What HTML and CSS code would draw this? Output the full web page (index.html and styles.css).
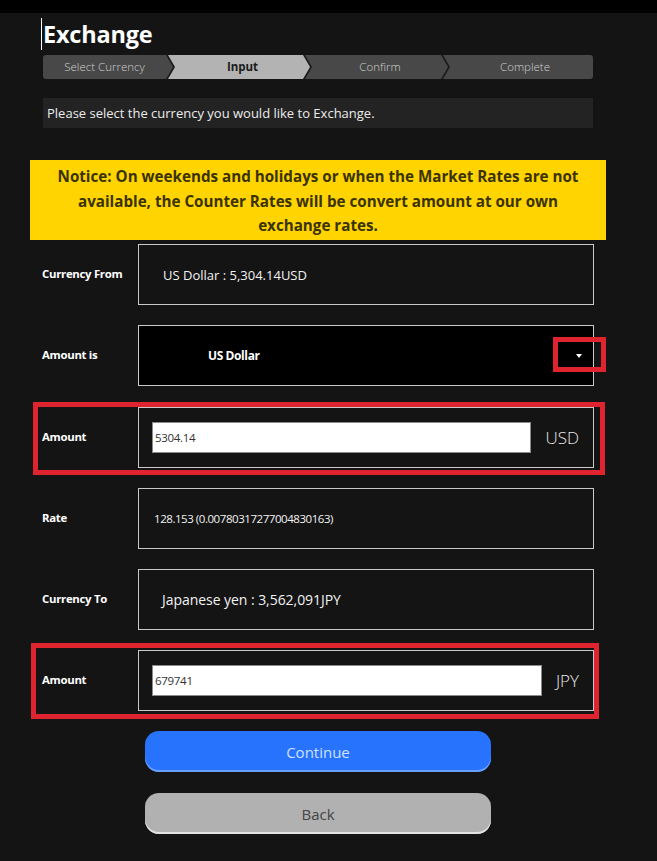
FILE: index.html
```html
<!DOCTYPE html>
<html lang="en">
<head>
<meta charset="utf-8">
<title>Exchange</title>
<link rel="stylesheet" href="styles.css">
</head>
<body>
<div class="topbar"></div>
<main class="page">
  <h1 class="title"><span class="caret"></span>Exchange</h1>
  <ol class="steps">
    <li class="step first">Select Currency</li>
    <li class="step active">Input</li>
    <li class="step">Confirm</li>
    <li class="step last">Complete</li>
  </ol>
  <div class="info">Please select the currency you would like to Exchange.</div>
  <div class="notice">Notice: On weekends and holidays or when the Market Rates are not available, the Counter Rates will be convert amount at our own exchange rates.</div>
  <div class="form">
    <div class="row">
      <div class="label">Currency From</div>
      <div class="field"><span class="text from">US Dollar : 5,304.14USD</span></div>
    </div>
    <div class="row">
      <div class="label">Amount is</div>
      <div class="field select">
        <span class="select-value">US Dollar</span>
        <span class="arrow"></span>
        <span class="mark mark-arrow"></span>
      </div>
    </div>
    <div class="row gap-plus">
      <div class="label">Amount</div>
      <div class="field inputs">
        <input class="amount" type="text" value="5304.14">
        <span class="unit">USD</span>
      </div>
      <span class="mark mark-a"></span>
    </div>
    <div class="row">
      <div class="label">Rate</div>
      <div class="field"><span class="text rate">128.153 (0.00780317277004830163)</span></div>
    </div>
    <div class="row">
      <div class="label">Currency To</div>
      <div class="field"><span class="text to">Japanese yen : 3,562,091JPY</span></div>
    </div>
    <div class="row">
      <div class="label">Amount</div>
      <div class="field inputs">
        <input class="amount" type="text" value="679741">
        <span class="unit">JPY</span>
      </div>
      <span class="mark mark-b"></span>
    </div>
  </div>
  <div class="actions">
    <button class="btn primary" type="button">Continue</button>
    <button class="btn secondary" type="button">Back</button>
  </div>
</main>
</body>
</html>
```

FILE: styles.css
```css
html, body {
  margin: 0;
  padding: 0;
}
body {
  background: #141414;
  font-family: "Open Sans", "Noto Sans", sans-serif;
  color: #fff;
  width: 657px;
  height: 861px;
  overflow: hidden;
}
.topbar {
  height: 13px;
  background: #000;
}
.page {
  padding-left: 43px;
  width: 550px;
}
.title {
  margin: 5px 0 0 -2px;
  font-size: 23.5px;
  line-height: 32px;
  font-weight: 700;
  color: #fff;
  display: flex;
  align-items: center;
  letter-spacing: -0.2px;
}
.caret {
  display: inline-block;
  width: 1px;
  height: 32px;
  background: #fff;
  margin-right: 1px;
}
.steps {
  list-style: none;
  margin: 5px 0 0;
  padding: 0;
  display: flex;
  height: 24px;
  background: #1c1c1c;
  border-radius: 3px;
  overflow: hidden;
}
.step {
  height: 24px;
  line-height: 24px;
  font-size: 11.5px;
  font-weight: 300;
  color: #cfcfcf;
  background: #484848;
  text-align: center;
  box-sizing: border-box;
  padding: 0 7px 0 14px;
  margin-left: -5px;
  width: 143px;
  clip-path: polygon(0 0, calc(100% - 7px) 0, 100% 50%, calc(100% - 7px) 100%, 0 100%, 7px 50%);
}
.step.first {
  margin-left: 0;
  width: 130px;
  padding: 0 7px 0 0;
  clip-path: polygon(0 0, calc(100% - 7px) 0, 100% 50%, calc(100% - 7px) 100%, 0 100%);
}
.step.active {
  width: 142px;
  background: #b3b3b3;
  color: #1a1a1a;
  font-weight: 700;
}
.step.last {
  flex: 1;
  padding-right: 0;
  clip-path: polygon(0 0, 100% 0, 100% 100%, 0 100%, 7px 50%);
}
.info {
  margin-top: 19px;
  height: 30px;
  line-height: 30px;
  padding-left: 4px;
  background: #232323;
  color: #ececec;
  font-size: 13px;
}
.notice {
  margin: 32px -13px 0;
  height: 80px;
  box-sizing: border-box;
  padding: 4px 24px;
  background: #ffd400;
  color: #3a3200;
  font-weight: 700;
  font-size: 15.2px;
  line-height: 24.5px;
  text-align: center;
}
.form {
  margin: 4px 0 0 -1px;
  width: 552px;
  display: flex;
  flex-direction: column;
  gap: 20px;
}
.row {
  position: relative;
  display: flex;
  align-items: center;
  height: 61px;
}
.row.gap-plus {
  margin-top: 1px;
}
.label {
  width: 96px;
  flex: none;
  font-size: 11.4px;
  font-weight: 700;
  color: #fff;
  letter-spacing: -0.3px;
  margin-top: -2px;
}
.field {
  position: relative;
  flex: 1;
  height: 61px;
  box-sizing: border-box;
  border: 1px solid #c9c9c9;
  display: flex;
  align-items: center;
}
.text {
  font-size: 13px;
  color: #f2f2f2;
}
.text.from { padding-left: 24px; }
.text.rate { padding-left: 15px; font-size: 11.5px; letter-spacing: -0.45px; }
.text.to { padding-left: 23px; font-size: 14px; letter-spacing: -0.05px; }
.field.select {
  background: #000;
}
.select-value {
  padding-left: 69px;
  font-size: 12px;
  font-weight: 700;
  color: #fff;
  letter-spacing: -0.4px;
}
.arrow {
  position: absolute;
  right: 11px;
  top: 28px;
  width: 0;
  height: 0;
  border-left: 3.5px solid transparent;
  border-right: 3.5px solid transparent;
  border-top: 4px solid #fff;
}
.field.inputs {
  padding: 0 14px 0 13px;
}
.amount {
  flex: 1;
  min-width: 0;
  height: 31px;
  box-sizing: border-box;
  border: 1px solid #8a8a8a;
  background: #fff;
  margin: 0;
  padding: 0 2px;
  font-family: "Open Sans", "Noto Sans", sans-serif;
  font-size: 11.5px;
  color: #333;
  letter-spacing: -0.3px;
  outline: none;
}
.unit {
  margin-left: 14px;
  font-size: 17px;
  font-weight: 300;
  color: #e6e6e6;
}
.mark {
  position: absolute;
  border: 5px solid #df2430;
  pointer-events: none;
}
.mark-arrow {
  right: -13px;
  top: 11px;
  width: 43px;
  height: 25px;
}
.mark-a {
  left: -9px;
  right: -11px;
  top: -5px;
  bottom: -7px;
}
.mark-b {
  left: -11px;
  right: -5px;
  top: -7px;
  bottom: -8px;
}
.actions {
  margin: 20px 0 0 102px;
  width: 346px;
  display: flex;
  flex-direction: column;
  gap: 21px;
}
.btn {
  height: 41px;
  border: none;
  border-radius: 14px;
  font-family: "Open Sans", "Noto Sans", sans-serif;
  font-size: 15px;
  cursor: pointer;
}
.btn.primary {
  background: #2773fe;
  color: #cfe1ff;
  box-shadow: inset 0 -2px 0 #6aa0ff;
}
.btn.secondary {
  background: #b1b1b1;
  color: #444;
  box-shadow: inset 0 -2px 0 #e2e2e2;
}
```
